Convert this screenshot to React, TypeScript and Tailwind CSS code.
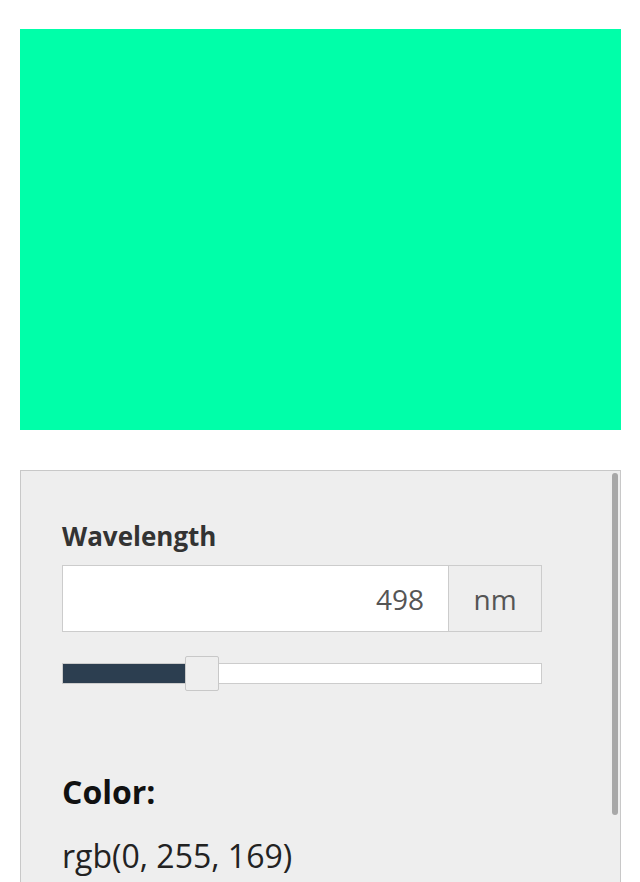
import React from "react";

export default function App() {
  const font = { fontFamily: '"Open Sans", "Noto Sans", sans-serif' };
  return (
    <div className="w-[640px] h-[882px] bg-white overflow-hidden pt-[29px] pl-[20px]" style={font}>
      <div className="h-[401px] w-[601px] bg-[#00ffa9]" />
      <div className="relative mt-[40px] w-[601px] h-[420px] bg-[#eeeeee] border border-b-0 border-[#c8c8c8] pl-[41px] pt-[49px]">
        <div className="absolute right-[2px] top-[2px] w-[6px] h-[342px] rounded-full bg-[#a8a8a8]" />
        <div className="text-[26px] leading-[32px] font-bold text-[#333333]">Wavelength</div>
        <div className="mt-[13px] flex w-[480px] h-[67px]">
          <div className="flex-1 bg-white border border-[#cccccc] flex items-center justify-end pr-[24px] text-[28px] text-[#555555]">
            498
          </div>
          <div className="w-[93px] bg-[#eeeeee] border border-l-0 border-[#cccccc] flex items-center justify-center text-[28px] text-[#555555]">
            nm
          </div>
        </div>
        <div className="relative mt-[24px] w-[480px] h-[34px] flex items-center">
          <div className="w-full h-[21px] bg-white border border-[#cccccc] flex">
            <div className="w-[123px] h-full bg-[#2c3e50]" />
          </div>
          <div className="absolute left-[123px] top-0 w-[34px] h-[35px] bg-[#eeeeee] border border-[#c8c8c8] rounded-[2px]" />
        </div>
        <div className="mt-[82px] text-[32px] leading-[40px] font-bold text-[#111111]">Color:</div>
        <div className="mt-[24px] text-[32px] leading-[40px] text-[#222222]">rgb(0, 255, 169)</div>
      </div>
    </div>
  );
}
